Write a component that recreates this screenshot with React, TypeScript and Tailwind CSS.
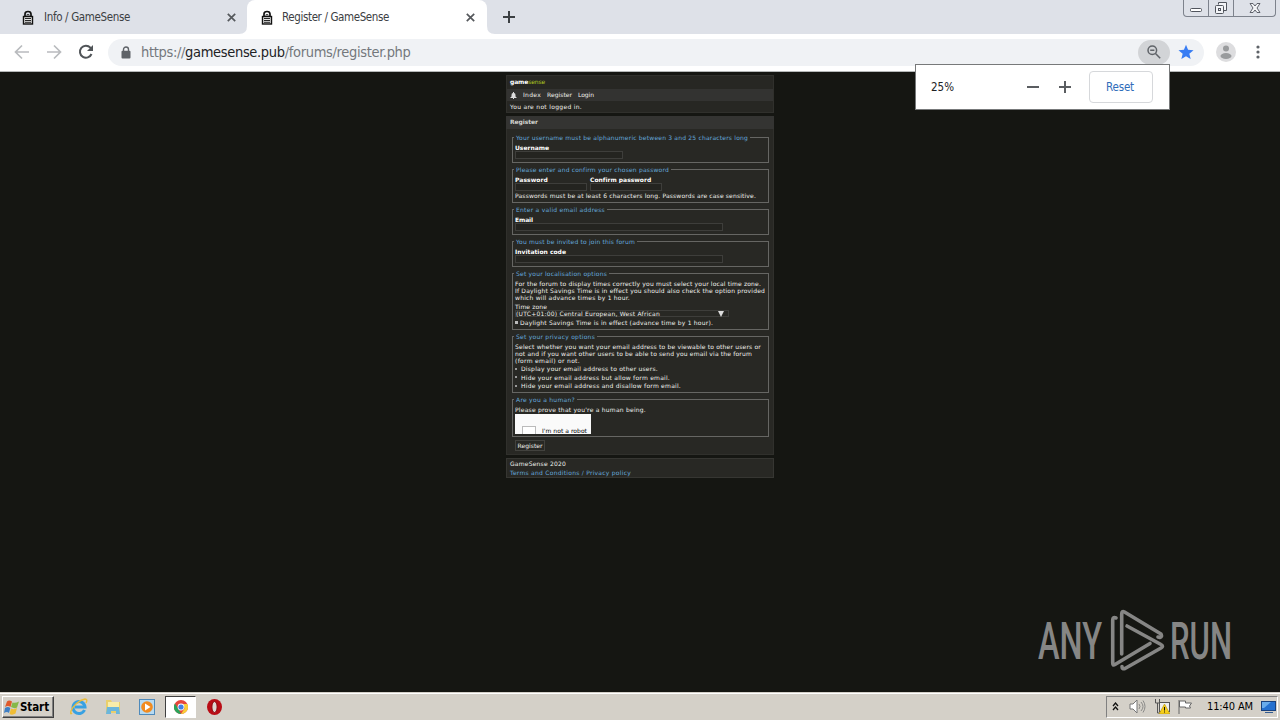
import { useLayoutEffect, useRef } from "react";
import type { ReactNode } from "react";

/* Text set to an exact width, by tracking or by horizontal scaling. */
function Fit({ w, children, className = "", stretch = false }: { w: number; children: ReactNode; className?: string; stretch?: boolean }) {
  const ref = useRef<HTMLSpanElement>(null);
  useLayoutEffect(() => {
    const el = ref.current;
    if (!el) return;
    el.style.letterSpacing = "0px";
    el.style.transform = "none";
    const natural = el.getBoundingClientRect().width;
    const count = (el.textContent || "").length;
    if (stretch) {
      el.style.transformOrigin = "0 50%";
      el.style.transform = `scaleX(${w / natural})`;
    } else {
      el.style.letterSpacing = `${(w - natural) / count}px`;
    }
  }, [w, stretch]);
  return (
    <span className="block shrink-0" style={{ width: w }}>
      <span ref={ref} className={`inline-block whitespace-pre ${className}`}>{children}</span>
    </span>
  );
}

function Group({ legend, lw, className, children }: { legend: string; lw: number; className: string; children: ReactNode }) {
  return (
    <div className={`relative flex w-[257px] shrink-0 flex-col border border-[#666663] pl-[2px] ${className}`}>
      <div className="absolute top-[-4px] left-[1px] h-[7px] bg-[#282824] px-[2px] leading-[7px] text-[#66a8dc]">
        <Fit w={lw}>{legend}</Fit>
      </div>
      {children}
    </div>
  );
}

const Field = ({ className }: { className: string }) => <div className={`h-[8px] shrink-0 border border-[#3e3e3b] bg-[#242420] ${className}`} />;

function TabLock() {
  return (
    <svg width="12" height="15" viewBox="0 0 12 15" fill="none" stroke="#111">
      <path d="M3 7V4q0-2.500 3-2.500T9 4v3" strokeWidth="1.700" />
      <path d="M5 7V4.500h2V7" strokeWidth=".7" />
      <rect x="1.500" y="6.500" width="9" height="7.500" fill="#e4e4e4" strokeWidth="1.400" />
      <path d="M3 8.500h6M3 10.500h6M3 12.300h6" strokeWidth=".9" />
    </svg>
  );
}

const TabClose = () => (
  <svg width="9" height="9" viewBox="0 0 9 9"><path d="M.8.8l7.4 7.4M8.2.8L.8 8.2" stroke="#55585c" strokeWidth="1.7" /></svg>
);

function TabBar() {
  return (
    <div className="flex h-[34px] items-start bg-[#dee1e8] text-[11.500px] text-[#3c4043]">
      <div className="flex h-[34px] w-[247px] items-center pl-[22px]">
        <TabLock />
        <div className="ml-[10px]"><Fit w={86}>Info / GameSense</Fit></div>
        <div className="ml-[97px]"><TabClose /></div>
      </div>
      <div className="relative flex h-[34px] w-[240px] items-center rounded-t-[8px] bg-white pl-[14px]">
        <svg className="absolute bottom-0 left-[-8px]" width="8" height="8"><path d="M8 0v8H0Q8 8 8 0" fill="#fff" /></svg>
        <svg className="absolute right-[-8px] bottom-0" width="8" height="8"><path d="M0 0v8h8Q0 8 0 0" fill="#fff" /></svg>
        <TabLock />
        <div className="ml-[9px]"><Fit w={107}>Register / GameSense</Fit></div>
        <div className="ml-[77px]"><TabClose /></div>
      </div>
      <svg className="mt-[11px] ml-[16px]" width="12" height="12"><path d="M6 0v12M0 6h12" stroke="#3c4043" strokeWidth="2" /></svg>
      <div className="mr-[4px] ml-auto flex h-[17px] w-[93px] rounded-b-[4px] border border-t-0 border-[#7d828c]">
        <div className="flex w-[25px] items-center justify-center border-r border-[#7d828c]">
          <svg width="12" height="6" className="mt-[4px]"><rect x=".5" y="1.500" width="11" height="3" rx="1" fill="#fff" stroke="#51555d" /></svg>
        </div>
        <div className="flex w-[25px] items-center justify-center border-r border-[#7d828c]">
          <svg width="14" height="14" fill="#f3f4f7" stroke="#51555d"><path d="M4.500 3.500v-2h8v8h-3" /><rect x="1.500" y="4.500" width="8" height="8" rx="1" /><rect x="4.500" y="7.500" width="2" height="2" /></svg>
        </div>
        <div className="flex flex-1 items-center justify-center">
          <svg width="12" height="12" viewBox="0 0 12 12"><path d="M1 1.500h3l2 2.500 2-2.500h3L8 6l3 4.500H8L6 8l-2 2.500H1L4 6z" fill="#f3f4f7" stroke="#51555d" strokeWidth=".9" /></svg>
        </div>
      </div>
    </div>
  );
}

function Toolbar() {
  return (
    <div className="flex h-[38px] items-center border-b border-[#b5b8b8] bg-white pb-px">
      <svg className="ml-[14px]" width="16" height="16" viewBox="0 0 16 16" fill="none" stroke="#b9bbbe" strokeWidth="1.700"><path d="M15 8H2M8 1.500L1.500 8 8 14.500" /></svg>
      <svg className="ml-[16px]" width="16" height="16" viewBox="0 0 16 16" fill="none" stroke="#b9bbbe" strokeWidth="1.700"><path d="M1 8h13M8 1.500L14.500 8 8 14.500" /></svg>
      <svg className="ml-[16px]" width="16" height="16" viewBox="0 0 16 16" fill="none" stroke="#505458" strokeWidth="2"><path d="M13.500 10A6 6 0 1 1 12.400 3.700L14 5.300" /><path d="M15 1v6H9z" fill="#505458" stroke="none" /></svg>
      <div className="ml-[14px] flex h-[27px] w-[1096px] items-center rounded-full bg-[#f0f2f5] pl-[13px] text-[14.500px]">
        <svg width="10" height="13" viewBox="0 0 10 13"><path d="M2.500 6V3.500a2.500 2.500 0 0 1 5 0V6" fill="none" stroke="#5f6368" strokeWidth="1.400" /><rect x=".5" y="4.800" width="9" height="7.700" rx="1" fill="#5f6368" /></svg>
        <div className="ml-[10px] text-[#74787c]">
          <Fit w={269.500}>https://<span className="text-[#202124]">gamesense.pub</span>/forums/register.php</Fit>
        </div>
        <div className="ml-auto flex h-[25px] w-[32px] items-center justify-center rounded-full bg-[#d2d4d7]">
          <svg width="14" height="14" viewBox="0 0 14 14" fill="none" stroke="#5f6368" strokeWidth="1.500"><circle cx="5.300" cy="5.300" r="4.300" /><path d="M8.500 8.500l4.700 4.700M3.200 5.300h4.200" /></svg>
        </div>
        <svg className="mr-[10px] ml-[8px]" width="16" height="16" viewBox="0 0 24 24"><path d="M12 1l3.100 7.600 8.200.6-6.300 5.300 2 8L12 18.200 5 22.500l2-8L.7 9.200l8.200-.6z" fill="#397df3" /></svg>
      </div>
      <svg className="ml-[12px]" width="20" height="20"><circle cx="10" cy="10" r="10" fill="#dddddf" /><circle cx="10" cy="6.500" r="3" fill="#999b9d" /><ellipse cx="10" cy="14" rx="5.500" ry="3" fill="#999b9d" /></svg>
      <svg className="ml-[20px]" width="4" height="14" fill="#5f6368"><circle cx="2" cy="2" r="1.600" /><circle cx="2" cy="7" r="1.600" /><circle cx="2" cy="12" r="1.600" /></svg>
    </div>
  );
}

function ZoomBubble() {
  return (
    <div className="absolute top-[64px] left-[915px] flex h-[46px] w-[255px] items-center border border-[#77797a] bg-white pl-[15px] text-[11.500px] text-[#202124]">
      <Fit w={23}>25%</Fit>
      <svg className="ml-[73px]" width="12" height="12"><path d="M0 6h12" stroke="#5a5d61" strokeWidth="2" /></svg>
      <svg className="ml-[20px]" width="12" height="12"><path d="M0 6h12M6 0v12" stroke="#5a5d61" strokeWidth="2" /></svg>
      <div className="ml-[18px] flex h-[32px] w-[64px] items-center justify-center rounded-[4px] border border-[#d6d8db] pr-[2px] text-[#2f6dba]"><Fit w={28}>Reset</Fit></div>
    </div>
  );
}

function Forum() {
  return (
    <div className="ml-[506px] flex w-[268px] flex-col pt-[3px] font-['DejaVu_Sans',sans-serif] text-[6px] leading-[7px] text-[#f0f0ec]">
      <div className="h-[38px] border border-[#30302c] bg-[#272723]">
        <div className="flex h-[13px] items-center pb-[2px] pl-[3px] font-bold text-white"><Fit w={35}>game<span className="font-normal text-[#b0cb20]">sense</span></Fit></div>
        <div className="flex h-[12px] items-center bg-[#333331] pb-[2px] pl-[3px]">
          <svg width="7" height="7" viewBox="0 0 7 7" className="mt-[3px]" fill="#ddd"><path d="M3 0h1v1q1.500 0 1.500 2v1.500L7 6H0l1.500-1.500V3Q1.500 1 3 1zM3 6h1v1H3z" /></svg>
          <div className="ml-[6px] flex gap-[6px]"><Fit w={18}>Index</Fit><Fit w={25}>Register</Fit><Fit w={16}>Login</Fit></div>
        </div>
        <div className="flex h-[12px] items-center pb-[2px] pl-[3px]"><Fit w={72}>You are not logged in.</Fit></div>
      </div>
      <div className="mt-[3px] flex h-[13px] items-center bg-[#343432] pb-[2px] pl-[4px] font-bold text-[#d2d2ce]"><Fit w={28}>Register</Fit></div>
      <div className="flex h-[326px] flex-col border border-t-0 border-[#30302c] bg-[#282824] pt-[8px] pl-[5px]">
        <Group className="h-[26px]" legend="Your username must be alphanumeric between 3 and 25 characters long" lw={232}>
          <div className="mt-[6px] font-bold text-white"><Fit w={34}>Username</Fit></div>
          <Field className="w-[108px]" />
        </Group>
        <Group className="mt-[6px] h-[34px]" legend="Please enter and confirm your chosen password" lw={153}>
          <div className="mt-[6px] flex font-bold text-white">
            <Fit w={33}>Password</Fit><div className="ml-[42px]"><Fit w={61}>Confirm password</Fit></div>
          </div>
          <div className="flex gap-[3px]"><Field className="w-[72px]" /><Field className="w-[72px]" /></div>
          <div className="mt-px"><Fit w={241}>Passwords must be at least 6 characters long. Passwords are case sensitive.</Fit></div>
        </Group>
        <Group className="mt-[6px] h-[26px]" legend="Enter a valid email address" lw={89}>
          <div className="mt-[6px] font-bold text-white"><Fit w={18}>Email</Fit></div>
          <Field className="w-[208px]" />
        </Group>
        <Group className="mt-[6px] h-[26px]" legend="You must be invited to join this forum" lw={119}>
          <div className="mt-[6px] font-bold text-white"><Fit w={51}>Invitation code</Fit></div>
          <Field className="w-[208px]" />
        </Group>
        <Group className="mt-[6px] h-[57px]" legend="Set your localisation options" lw={91}>
          <div className="mt-[6px]">
            <Fit w={246}>For the forum to display times correctly you must select your local time zone.</Fit>
            <Fit w={250}>If Daylight Savings Time is in effect you should also check the option provided</Fit>
            <Fit w={115}>which will advance times by 1 hour.</Fit>
          </div>
          <div className="mt-[2px] h-[7px]"><Fit w={32}>Time zone</Fit></div>
          <div className="flex h-[7px] w-[214px] items-center border border-[#3e3e3b]">
            <Fit w={144}>(UTC+01:00) Central European, West African</Fit>
            <svg className="ml-[58px]" width="6" height="6"><path d="M0 0h6L3 6z" fill="#ddd" /></svg>
          </div>
          <div className="mt-[2px] flex items-center"><span className="mr-[2px] size-[3px] bg-[#bbb]" /><Fit w={193}>Daylight Savings Time is in effect (advance time by 1 hour).</Fit></div>
        </Group>
        <Group className="mt-[6px] h-[57px]" legend="Set your privacy options" lw={79}>
          <div className="mt-[6px]">
            <Fit w={246}>Select whether you want your email address to be viewable to other users or</Fit>
            <Fit w={237}>not and if you want other users to be able to send you email via the forum</Fit>
            <Fit w={65}>(form email) or not.</Fit>
          </div>
          <div className="mt-px flex flex-col gap-[1.500px]">
            <div className="flex items-center"><span className="mr-[4px] size-[2px] bg-[#999]" /><Fit w={137}>Display your email address to other users.</Fit></div>
            <div className="flex items-center"><span className="mr-[4px] size-[2px] bg-[#999]" /><Fit w={149}>Hide your email address but allow form email.</Fit></div>
            <div className="flex items-center"><span className="mr-[4px] size-[2px] bg-[#999]" /><Fit w={160}>Hide your email address and disallow form email.</Fit></div>
          </div>
        </Group>
        <Group className="mt-[6px] h-[38px]" legend="Are you a human?" lw={59}>
          <div className="mt-[6px]"><Fit w={131}>Please prove that you're a human being.</Fit></div>
          <div className="mt-px flex h-[20px] w-[76px] overflow-hidden bg-[#fafafa] text-black">
            <div className="mt-[12px] ml-[7px] h-[12px] w-[14px] shrink-0 border border-[#bbb] bg-white" />
            <div className="mt-[14px] ml-[6px] leading-[6px]"><Fit w={45}>I'm not a robot</Fit></div>
          </div>
        </Group>
        <div className="mt-[3px] ml-[3px] flex h-[11px] w-[30px] items-center justify-center border border-[#42423e]"><Fit w={25}>Register</Fit></div>
      </div>
      <div className="mt-[3px] flex h-[20px] flex-col gap-[2px] border border-[#363632] bg-[#282824] pt-px pl-[3px]">
        <Fit w={56}>GameSense 2020</Fit>
        <div className="text-[#66a8dc]"><Fit w={121}>Terms and Conditions / Privacy policy</Fit></div>
      </div>
    </div>
  );
}

function Watermark() {
  return (
    <div className="absolute top-[608px] left-[1038px] flex h-[66px] items-center font-[Roboto,sans-serif] text-[51px] leading-[66px] text-[#868685]">
      <div className="mt-[2px] font-medium"><Fit w={64} stretch>ANY</Fit></div>
      <svg className="ml-[8px] shrink-0" width="56" height="66" viewBox="0 0 56 66" fill="none" stroke="#868685" strokeWidth="3.600" strokeLinejoin="round" strokeLinecap="round">
        <path d="M11.700 46V6Q11.700 2.500 14.500 4L51 26Q52.500 29 50 29.500L48 29" />
        <path d="M6 10Q2.700 8.500 2.700 12V55Q2.700 58 5 56.500L40 35.500" />
        <path d="M17 18L51 36.500Q54 38 51 40L15 60.500Q12 61.500 12 58.500" />
      </svg>
      <div className="mt-[2px] ml-[4px] font-medium"><Fit w={62} stretch>RUN</Fit></div>
    </div>
  );
}

function Taskbar() {
  return (
    <div className="flex h-[28px] shrink-0 items-center border-t border-[#d4d0c8] bg-[#d4d0c8] text-black shadow-[inset_0_1px_0_#fff]">
      <div className="mt-[1px] ml-[2px] flex h-[22px] w-[52px] items-center border border-t-white border-r-[#404040] border-b-[#404040] border-l-white pl-px text-[11.500px] font-bold shadow-[inset_-1px_-1px_0_#808080]">
        <svg width="15" height="15" viewBox="0 0 15 15"><path d="M3 1.500q2-2 5 0L6.500 7Q4 5 1 7z" fill="#e05a2b" /><path d="M8.500 2.500q3 1 6.500-1l-2 6q-2.500 1.500-6-.500z" fill="#86b848" /><path d="M1 8q3-2 5.300 0L5 13Q3 11 0 13z" fill="#3f7fc4" /><path d="M7 8.500q3 1.500 6-.5L11.500 13.500q-3 2-6 .500z" fill="#f0bd35" /></svg>
        <div className="ml-[1px]"><Fit w={29}>Start</Fit></div>
      </div>
      <svg className="ml-[16px]" width="18" height="18" viewBox="0 0 18 18" fill="none"><path d="M14.500 12A6 6 0 1 1 15 9H5" stroke="#38a1e2" strokeWidth="3" /><path d="M2 15Q0 17 1 13C3 8 9 2 15 1q3 0 1 4" stroke="#e9bd3d" strokeWidth="1.400" /></svg>
      <svg className="ml-[17px]" width="16" height="16" viewBox="0 0 16 16"><path d="M1 1h5l1 2h8v11H1z" fill="#e9cf6c" /><path d="M3 3h11v5H3z" fill="#f8edaa" /><path d="M2 8h12l1 7h-4v-3H6v3H1z" fill="#6bb6dc" /></svg>
      <svg className="ml-[18px]" width="16" height="16" viewBox="0 0 16 16"><rect x=".5" y=".5" width="15" height="15" fill="#b6daf2" stroke="#4e8abb" /><circle cx="8" cy="8" r="5.800" fill="#f18b20" /><path d="M6 4.500v7L11.500 8z" fill="#fff" /></svg>
      <div className="ml-[10px] flex h-[22px] w-[31px] items-center justify-center border border-t-[#404040] border-r-white border-b-white border-l-[#404040] bg-white">
        <svg width="14" height="14" viewBox="0 0 14 14"><circle cx="7" cy="7" r="7" fill="#e6463b" /><path d="M.9 3.500L5 10l2 4A7 7 0 0 1 .9 3.500" fill="#29a35a" /><path d="M7 14l3.500-5.500L9.500 4h3.800A7 7 0 0 1 7 14" fill="#f8cf37" /><circle cx="7" cy="7" r="3.400" fill="#fff" /><circle cx="7" cy="7" r="2.600" fill="#417fe5" /></svg>
      </div>
      <svg className="ml-[11px]" width="15" height="16" viewBox="0 0 15 16"><ellipse cx="7.500" cy="8" rx="7.500" ry="8" fill="#b90c15" /><ellipse cx="7.500" cy="8" rx="2.600" ry="5.500" fill="#ded6d1" stroke="#8b0710" /></svg>
      <div className="mr-[2px] ml-auto flex h-[22px] w-[172px] items-center border border-t-[#808080] border-r-white border-b-white border-l-[#808080] pl-[5px] text-[11px]">
        <svg width="7" height="9" fill="none" stroke="#111" strokeWidth="1.300"><path d="M1 4l2.500-3L6 4M1 8l2.500-3L6 8" /></svg>
        <svg className="ml-[10px]" width="17" height="15" viewBox="0 0 17 15" fill="none" stroke="#777"><path d="M1 5h3l4-4v13l-4-4H1z" fill="#fff" /><path d="M10 5q2 2.500 0 5M12 3q4 4.500 0 9M14 1.500q4 6 0 12" strokeWidth=".8" /></svg>
        <svg className="ml-[8px]" width="16" height="15" viewBox="0 0 16 15"><rect x="5.500" y="3.500" width="10" height="9" fill="#eee" stroke="#555" /><path d="M1.500 0v4h4V0M3.500 4v10h4" fill="none" stroke="#555" /><path d="M10.500 5L16 15H5z" fill="#f6ce1b" stroke="#b4920a" strokeWidth=".6" /><path d="M10.500 8v3.500m0 1v1" stroke="#111" /></svg>
        <svg className="ml-[7px]" width="16" height="15" viewBox="0 0 16 15" fill="#fff" stroke="#666"><path d="M2 1v14M2.500 2h6v2h6l-2 3 1 2h-5V8h-6z" /></svg>
        <div className="ml-[14px]"><Fit w={46}>11:40 AM</Fit></div>
        <svg className="ml-[8px]" width="15" height="14" viewBox="0 0 15 14"><rect x=".5" y="1.500" width="14" height="9" fill="#2470cf" stroke="#18417e" /><path d="M1 2h9L3 8H1z" fill="#68abeb" /><path d="M4 12.500h8" stroke="#345c91" /></svg>
      </div>
    </div>
  );
}

export default function App() {
  return (
    <div className="relative flex h-[720px] w-[1280px] flex-col overflow-hidden bg-[#151612] font-['DejaVu_Sans_Condensed','DejaVu_Sans',sans-serif] leading-[16px]">
      <TabBar />
      <Toolbar />
      <div className="flex-1"><Forum /></div>
      <Taskbar />
      <ZoomBubble />
      <Watermark />
    </div>
  );
}
